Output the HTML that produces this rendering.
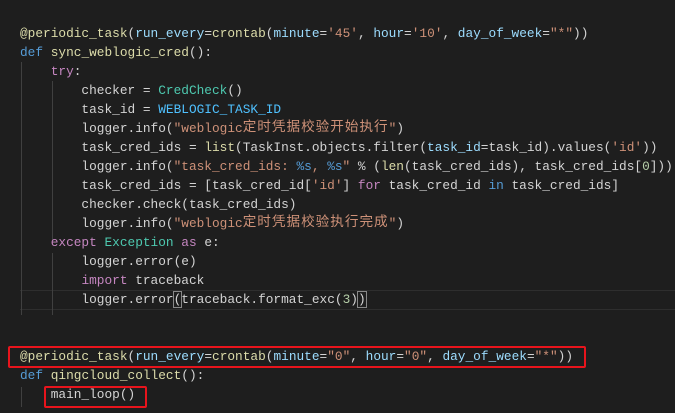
<!DOCTYPE html>
<html><head><meta charset="utf-8"><style>
html,body{margin:0;padding:0;background:#1e1e1e;width:675px;height:413px;overflow:hidden}
#c{position:absolute;left:20px;top:24px;font-family:"Liberation Mono","Noto Sans CJK SC",monospace;font-size:12.8px;line-height:19px;color:#d4d4d4;white-space:pre}
.l{height:19px}
.d{color:#dcdcaa}.k{color:#569cd6}.p{color:#9cdcfe}.s{color:#ce9178}.m{color:#c586c0}.t{color:#4ec9b0}.f{color:#dcdcaa}.c{color:#4fc1ff}.n{color:#b5cea8}
.z{display:inline-block;font-size:13.6px;letter-spacing:1px;vertical-align:top}
.g{position:absolute;width:1px;background:#404040}
.box{position:absolute;border:2px solid #e8141c;border-radius:2px}
.hl{position:absolute;left:20px;right:0;top:290px;height:18px;border-top:1px solid #2e2e2e;border-bottom:1px solid #2e2e2e}
</style></head><body>
<div class="hl"></div>
<div class="g" style="left:21px;top:62px;height:253px"></div>
<div class="g" style="left:52px;top:81px;height:159px"></div>
<div class="g" style="left:52px;top:253px;height:62px"></div>
<div class="g" style="left:21px;top:387px;height:20px"></div>
<div id="c"><div class="l"><span class="d">@periodic_task</span>(<span class="p">run_every</span>=<span class="f">crontab</span>(<span class="p">minute</span>=<span class="s">'45'</span>, <span class="p">hour</span>=<span class="s">'10'</span>, <span class="p">day_of_week</span>=<span class="s">"*"</span>))</div><div class="l"><span class="k">def</span> <span class="f">sync_weblogic_cred</span>():</div><div class="l">    <span class="m">try</span>:</div><div class="l">        checker = <span class="t">CredCheck</span>()</div><div class="l">        task_id = <span class="c">WEBLOGIC_TASK_ID</span></div><div class="l">        logger.info(<span class="s">"weblogic<span class="z">定时凭据校验开始执行</span>"</span>)</div><div class="l">        task_cred_ids = <span class="f">list</span>(TaskInst.objects.filter(<span class="p">task_id</span>=task_id).values(<span class="s">'id'</span>))</div><div class="l">        logger.info(<span class="s">"task_cred_ids: <span class="k">%s</span>, <span class="k">%s</span>"</span> % (<span class="f">len</span>(task_cred_ids), task_cred_ids[<span class="n">0</span>]))</div><div class="l">        task_cred_ids = [task_cred_id[<span class="s">'id'</span>] <span class="m">for</span> task_cred_id <span class="k">in</span> task_cred_ids]</div><div class="l">        checker.check(task_cred_ids)</div><div class="l">        logger.info(<span class="s">"weblogic<span class="z">定时凭据校验执行完成</span>"</span>)</div><div class="l">    <span class="m">except</span> <span class="t">Exception</span> <span class="m">as</span> e:</div><div class="l">        logger.error(e)</div><div class="l">        <span class="m">import</span> traceback</div><div class="l">        logger.error<span style="outline:1px solid #888">(</span>traceback.format_exc(<span class="n">3</span>)<span style="outline:1px solid #888">)</span></div><div class="l"> </div><div class="l"> </div><div class="l"><span class="d">@periodic_task</span>(<span class="p">run_every</span>=<span class="f">crontab</span>(<span class="p">minute</span>=<span class="s">"0"</span>, <span class="p">hour</span>=<span class="s">"0"</span>, <span class="p">day_of_week</span>=<span class="s">"*"</span>))</div><div class="l"><span class="k">def</span> <span class="f">qingcloud_collect</span>():</div><div class="l">    main_loop()</div></div>
<div class="box" style="left:8px;top:346px;width:574px;height:18px"></div>
<div class="box" style="left:44px;top:386px;width:99px;height:18px"></div>
</body></html>
